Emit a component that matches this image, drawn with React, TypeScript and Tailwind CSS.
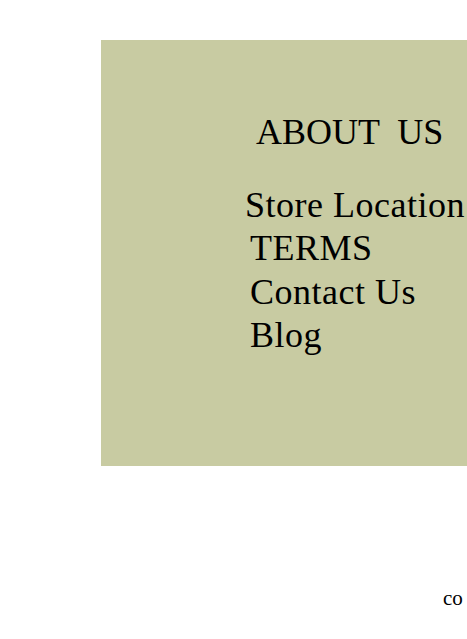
import React from 'react'

const links = ['TERMS', 'Contact Us', 'Blog']

export default function App() {
  return (
    <div className="w-full h-screen overflow-hidden bg-white text-black font-['Liberation_Serif',serif]">
      <div className="pt-10 pl-[101px]">
        <div className="w-[420px] h-[426px] bg-[#c8cba2] pt-[71px]">
          <h2 className="ml-[155px] text-[36px] leading-[1.2] whitespace-pre">ABOUT  US</h2>
          <ul className="mt-[30px] text-[36px] leading-[1.2] tracking-[0.5px]">
            <li className="ml-[144px] whitespace-nowrap">Store Location</li>
            {links.map((l) => (
              <li key={l} className="ml-[149px] whitespace-nowrap">
                {l}
              </li>
            ))}
          </ul>
        </div>
      </div>
      <p className="mt-[122px] ml-[443px] text-[21px] leading-none whitespace-nowrap">co</p>
    </div>
  )
}
